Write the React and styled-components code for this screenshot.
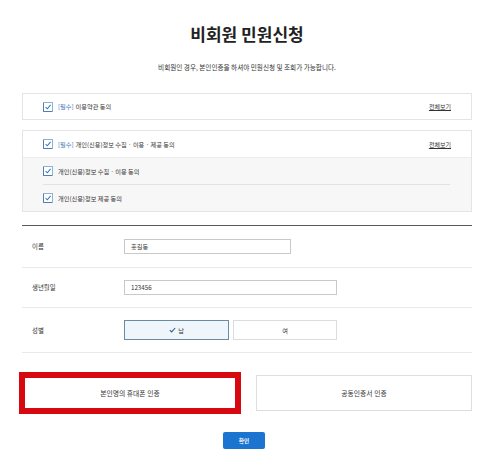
import React from "react";
import styled, { createGlobalStyle } from "styled-components";

const Global = createGlobalStyle`
  html, body { margin: 0; padding: 0; background: #fff; }
  body { font-family: "Noto Sans CJK KR", "Noto Sans", sans-serif; color: #333; }
  * { box-sizing: border-box; }
`;

const Page = styled.div`
  width: 500px;
  height: 467px;
  padding: 0 28px 0 22px;
  display: flex;
  flex-direction: column;
  overflow: hidden;
`;

const Title = styled.h1`
  margin: 23px 0 0;
  font-size: 17px;
  line-height: 22px;
  font-weight: 700;
  text-align: center;
  color: #222;
`;

const Sub = styled.p`
  margin: 18px 0 0;
  font-size: 6.6px;
  line-height: 9px;
  text-align: center;
  color: #333;
`;

const Box = styled.div`
  margin-top: ${(p) => p.$mt}px;
  border: 1px solid #e4e4e4;
  background: #fff;
`;

const AgreeRow = styled.div`
  height: ${(p) => p.$h || 27}px;
  display: flex;
  align-items: center;
  padding: 0 20px 0 20px;
  font-size: 6.2px;
  color: #333;
  background: ${(p) => (p.$gray ? "#f7f7f7" : "#fff")};
`;

const SubArea = styled.div`
  background: #f7f7f7;
  border-top: 1px solid #ececec;
  padding: 0 21px 0 20px;
`;

const SubRow = styled(AgreeRow)`
  padding: 0;
  background: transparent;
  border-bottom: ${(p) => (p.$line ? "1px solid #e2e2e2" : "none")};
`;

const Req = styled.span`
  color: #3a74b6;
  margin-right: 2px;
`;

const Label = styled.span`
  flex: 1;
  margin-left: 5px;
`;

const More = styled.a`
  font-size: 6px;
  color: #333;
  text-decoration: underline;
`;

const CheckWrap = styled.span`
  width: 10px;
  height: 10px;
  display: inline-flex;
  flex-shrink: 0;
`;

const Check = () => (
  <CheckWrap>
    <svg width="10" height="10" viewBox="0 0 10 10">
      <rect x="0.5" y="0.5" width="9" height="9" fill="#fff" stroke="#8eb2d4" />
      <path d="M0.5 1 V9.5 H9" fill="none" stroke="#4d7fb2" strokeWidth="1" />
      <path d="M2.6 5.2 L4.3 6.8 L7.6 2.8" fill="none" stroke="#3a7cc0" strokeWidth="1.1" />
    </svg>
  </CheckWrap>
);

const Rule = styled.div`
  margin-top: 13px;
  height: 1px;
  background: #5a5a5a;
`;

const FormRow = styled.div`
  height: ${(p) => p.$h}px;
  display: grid;
  grid-template-columns: 102px 1fr;
  align-items: center;
  border-bottom: 1px solid #e9e9e9;
`;

const FieldLabel = styled.span`
  padding-left: 10px;
  font-size: 6.4px;
  color: #333;
`;

const Input = styled.div`
  width: ${(p) => p.$w}px;
  height: 15px;
  border: 1px solid #c9c9c9;
  background: #fff;
  font-size: 6.2px;
  line-height: 13px;
  padding-left: 6px;
  color: #333;
`;

const Toggle = styled.div`
  display: flex;
  gap: 4px;
`;

const ToggleBtn = styled.div`
  width: ${(p) => p.$w}px;
  height: 20px;
  display: flex;
  align-items: center;
  justify-content: center;
  gap: 2px;
  font-size: 6.2px;
  color: #333;
  border: 1px solid ${(p) => (p.$on ? "#6d8aa3" : "#dcdcdc")};
  background: ${(p) => (p.$on ? "#eef5fb" : "#fff")};
`;

const AuthRow = styled.div`
  margin-top: 22px;
  display: flex;
  justify-content: space-between;
`;

const AuthBtn = styled.div`
  width: 216px;
  height: 36px;
  display: flex;
  align-items: center;
  justify-content: center;
  font-size: 6.8px;
  color: #333;
  background: #fff;
  border: 1px solid #dedede;
  outline: ${(p) => (p.$mark ? "6px solid #d7080f" : "none")};
  outline-offset: -3px;
`;

const Confirm = styled.div`
  align-self: center;
  margin: 21px 0 0 -6px;
  width: 42px;
  height: 17px;
  background: #1b74d0;
  border-radius: 2px;
  color: #fff;
  font-size: 5.6px;
  font-weight: 700;
  display: flex;
  align-items: center;
  justify-content: center;
`;

export default function App() {
  return (
    <Page>
      <Global />
      <Title>비회원 민원신청</Title>
      <Sub>비회원인 경우, 본인인증을 하셔야 민원신청 및 조회가 가능합니다.</Sub>

      <Box $mt={21}>
        <AgreeRow $h={25}>
          <Check />
          <Label>
            <Req>[필수]</Req>이용약관 동의
          </Label>
          <More>전체보기</More>
        </AgreeRow>
      </Box>

      <Box $mt={10}>
        <AgreeRow $h={26}>
          <Check />
          <Label>
            <Req>[필수]</Req>개인(신용)정보 수집 · 이용 · 제공 동의
          </Label>
          <More>전체보기</More>
        </AgreeRow>
        <SubArea>
          <SubRow $h={27} $line>
            <Check />
            <Label>개인(신용)정보 수집 · 이용 동의</Label>
          </SubRow>
          <SubRow $h={26}>
            <Check />
            <Label>개인(신용)정보 제공 동의</Label>
          </SubRow>
        </SubArea>
      </Box>

      <Rule />

      <FormRow $h={42}>
        <FieldLabel>이름</FieldLabel>
        <Input $w={167}>홍길동</Input>
      </FormRow>
      <FormRow $h={40}>
        <FieldLabel>생년월일</FieldLabel>
        <Input $w={213}>123456</Input>
      </FormRow>
      <FormRow $h={45}>
        <FieldLabel>성별</FieldLabel>
        <Toggle>
          <ToggleBtn $w={105} $on>
            <svg width="7" height="6" viewBox="0 0 7 6">
              <path d="M0.8 3.2 L2.6 4.9 L6.2 1" fill="none" stroke="#2f5f8f" strokeWidth="1.1" />
            </svg>
            남
          </ToggleBtn>
          <ToggleBtn $w={104}>여</ToggleBtn>
        </Toggle>
      </FormRow>

      <AuthRow>
        <AuthBtn $mark>본인명의 휴대폰 인증</AuthBtn>
        <AuthBtn>공동인증서 인증</AuthBtn>
      </AuthRow>

      <Confirm>확인</Confirm>
    </Page>
  );
}
